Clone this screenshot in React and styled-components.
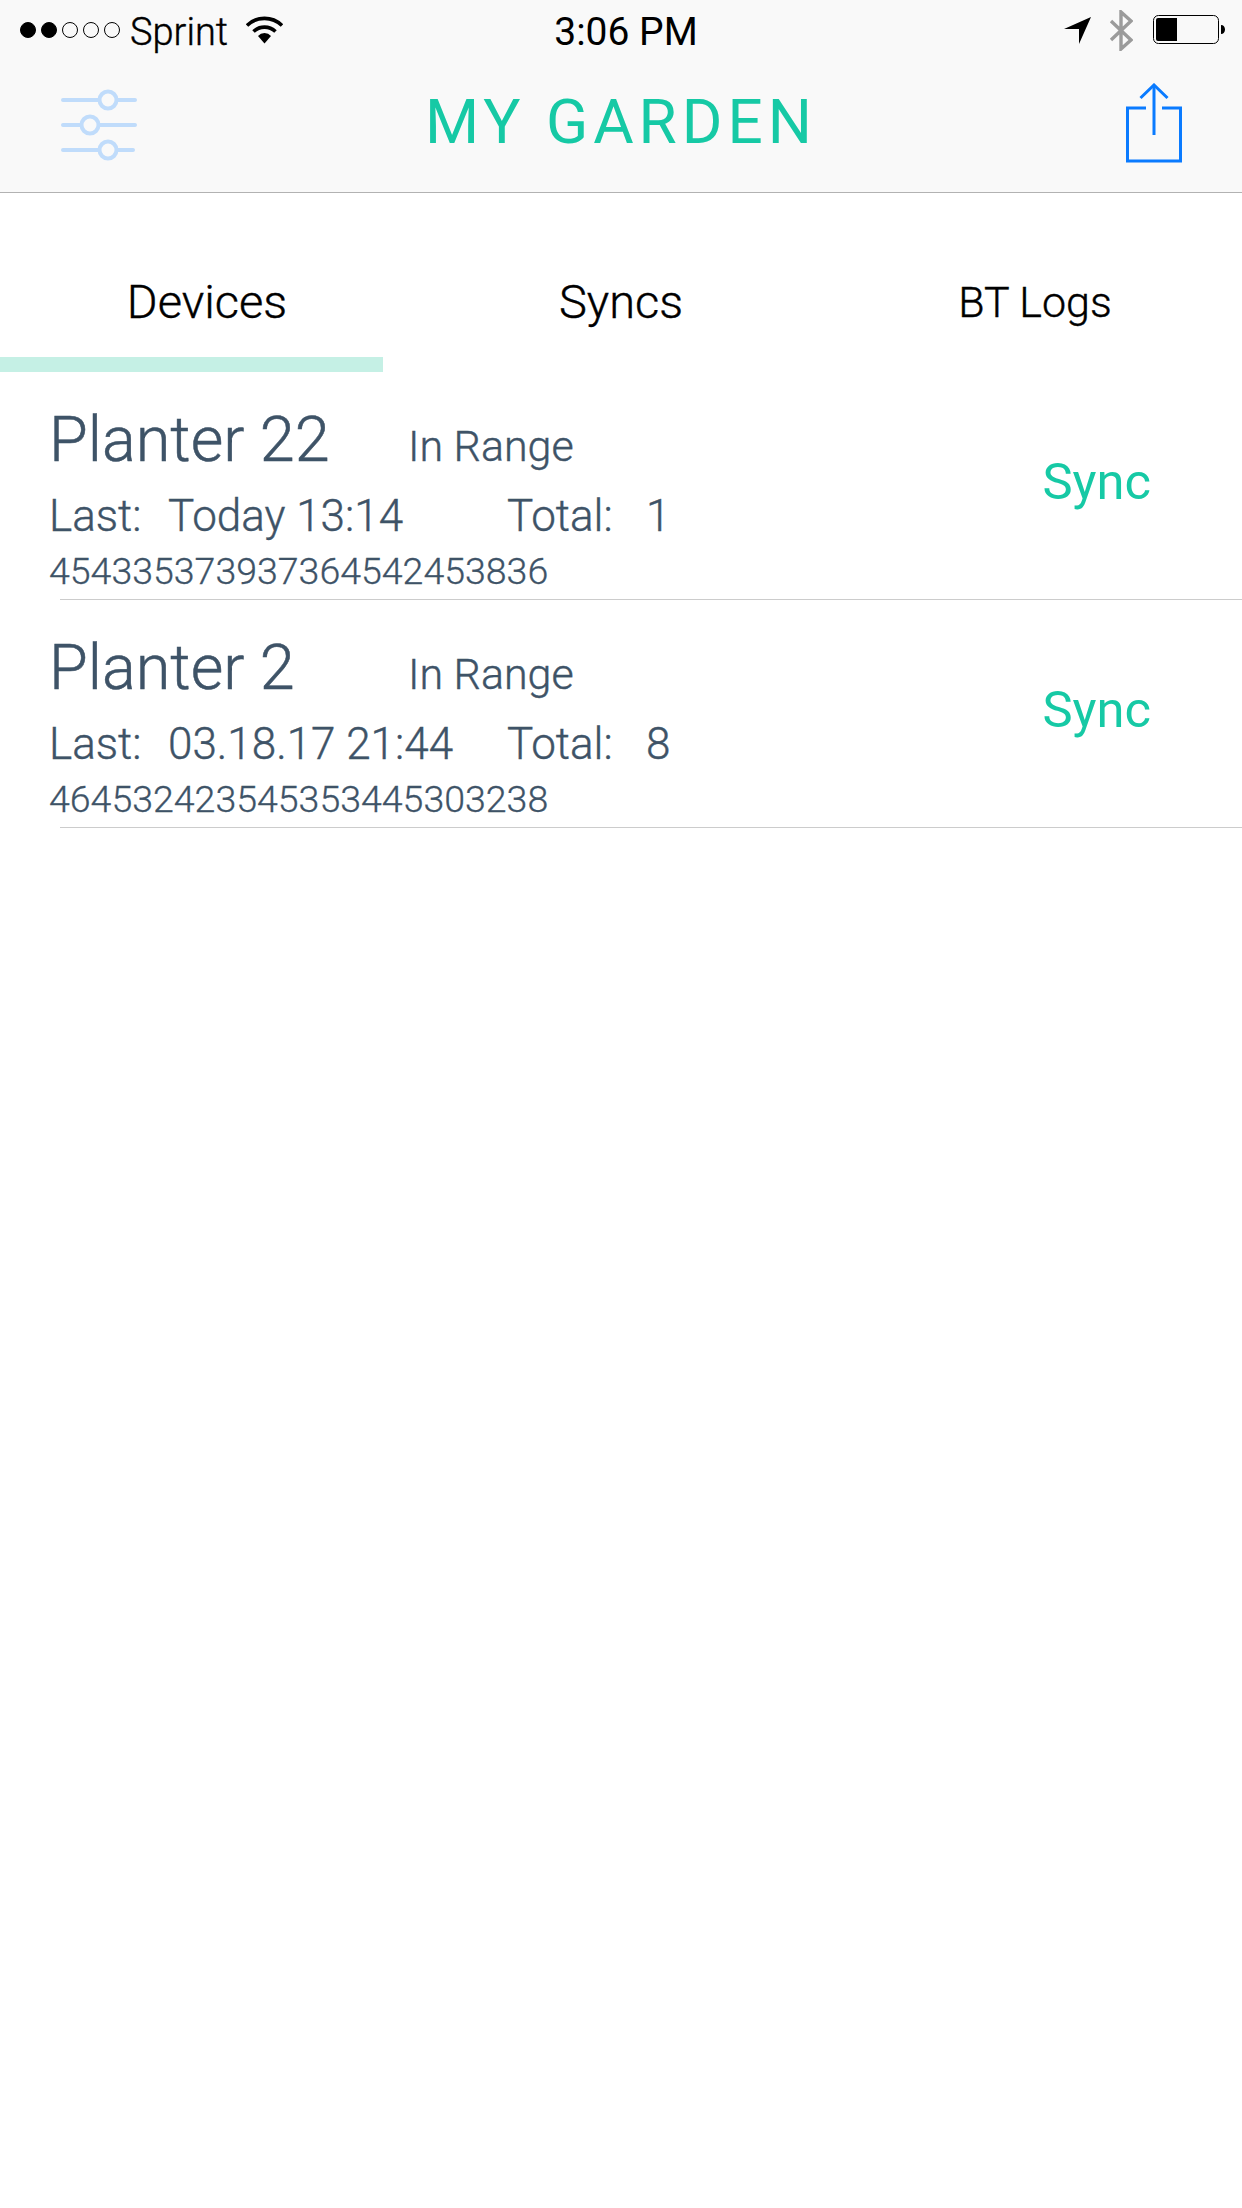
import React from "react";
import styled, { createGlobalStyle } from "styled-components";

const GlobalStyle = createGlobalStyle`
  html, body {
    margin: 0;
    padding: 0;
    background: #ffffff;
  }
  body {
    font-family: "Roboto", "Liberation Sans", sans-serif;
  }
`;

const Page = styled.div`
  width: 1242px;
  min-height: 2208px;
  background: #ffffff;
`;

const Header = styled.header`
  height: 192px;
  background: #f9f9f9;
  border-bottom: 1px solid #b2b2b2;
`;

const StatusBar = styled.div`
  height: 60px;
  display: grid;
  grid-template-columns: 1fr auto 1fr;
  align-items: center;
  color: #000;
`;

const StatusLeft = styled.div`
  display: flex;
  align-items: center;
  padding-left: 20px;
`;

const Dot = styled.span`
  width: 16px;
  height: 16px;
  box-sizing: border-box;
  border-radius: 50%;
  margin-right: 5px;
  border: 1px solid #000;
  background: ${(props) => (props.filled ? "#000" : "transparent")};
`;

const Carrier = styled.span`
  font-size: 38px;
  font-weight: 300;
  -webkit-text-stroke: 0.4px #000;
  margin: 3px 18px 0 5px;
`;

const Time = styled.div`
  font-size: 39px;
  font-weight: 400;
  padding: 3px 0 0 10px;
`;

const StatusRight = styled.div`
  display: flex;
  align-items: center;
  justify-content: flex-end;
  padding-right: 17px;
`;

const NavBar = styled.div`
  height: 132px;
  display: grid;
  grid-template-columns: 1fr auto 1fr;
  align-items: center;
`;

const SlidersButton = styled.button`
  display: block;
  border: 0;
  padding: 0 0 0 61px;
  background: none;
  justify-self: start;
`;

const ShareButton = styled.button`
  display: block;
  border: 0;
  padding: 0 60px 3px 0;
  background: none;
  justify-self: end;
`;

const Title = styled.h1`
  margin: 0 0 10px;
  font-size: 62px;
  font-weight: 400;
  letter-spacing: 5px;
  color: #16c9a5;
`;

const Tabs = styled.nav`
  display: grid;
  grid-template-columns: repeat(3, 414px);
  height: 179px;
`;

const Tab = styled.div`
  display: flex;
  flex-direction: column;
  align-items: ${(props) => (props.active ? "flex-start" : "center")};
  color: #000;
`;

const TabLabel = styled.div`
  height: 164px;
  font-size: ${(props) => props.size}px;
  font-weight: 300;
  -webkit-text-stroke: 0.4px #000;
  line-height: 218px;
  width: ${(props) => (props.active ? "414px" : "auto")};
  text-align: center;
`;

const TabMarker = styled.div`
  width: 383px;
  height: 15px;
  background: #c5f0e5;
`;

const DeviceRow = styled.div`
  height: 227px;
  box-sizing: border-box;
  padding: 0 91px 0 49px;
  display: flex;
  align-items: center;
  justify-content: space-between;
  color: #3e5367;
`;

const DeviceInfo = styled.div`
  display: flex;
  flex-direction: column;
  align-self: flex-start;
  padding-top: 31px;
`;

const NameLine = styled.div`
  display: grid;
  grid-template-columns: 359px auto;
  align-items: baseline;
  height: 87px;
`;

const Name = styled.div`
  font-size: 63px;
  font-weight: 300;
  -webkit-text-stroke: 0.5px #3e5367;
`;

const Range = styled.div`
  font-size: 43px;
  font-weight: 300;
  -webkit-text-stroke: 0.4px #3e5367;
`;

const MetaLine = styled.div`
  display: grid;
  grid-template-columns: 119px 339px 139px auto;
  font-size: 44px;
  font-weight: 300;
  -webkit-text-stroke: 0.4px #3e5367;
  height: 59px;
`;

const Serial = styled.div`
  font-size: 37.5px;
  font-weight: 300;
  -webkit-text-stroke: 0.3px #3e5367;
`;

const SyncLink = styled.div`
  font-size: 50.7px;
  font-weight: 400;
  margin-bottom: 8px;
  color: #16c9a5;
`;

const Divider = styled.div`
  height: 1px;
  margin-left: 60px;
  background: #cccccc;
`;

const SignalDots = () => (
  <>
    <Dot filled />
    <Dot filled />
    <Dot />
    <Dot />
    <Dot />
  </>
);

const WifiIcon = () => (
  <svg width="37" height="28" viewBox="0 0 37 28">
    <path d="M1 9.5a25 25 0 0 1 35 0" fill="none" stroke="#000" strokeWidth="3.6" />
    <path d="M7.5 15.5a16 16 0 0 1 22 0" fill="none" stroke="#000" strokeWidth="3.6" />
    <path d="M12 20a8.5 8.5 0 0 1 13 0l-6.5 7.5z" fill="#000" />
  </svg>
);

const LocationIcon = () => (
  <svg width="27" height="27" viewBox="0 0 27 27" style={{ marginRight: 18 }}>
    <path d="M27 0L15 27V12H0z" fill="#000" />
  </svg>
);

const BluetoothIcon = () => (
  <svg width="24" height="41" viewBox="0 0 24 41" style={{ marginRight: 20 }}>
    <path
      d="M2 11l20 19-10 9V2l10 9L2 30"
      fill="none"
      stroke="#9b9b9b"
      strokeWidth="3.4"
    />
  </svg>
);

const BatteryIcon = () => (
  <svg width="72" height="30" viewBox="0 0 72 30">
    <rect x="0.5" y="0.5" width="65" height="28" rx="5" fill="none" stroke="#000" strokeWidth="1" />
    <path d="M3 5a2 2 0 0 1 2-2h19v23H5a2 2 0 0 1-2-2z" fill="#000" />
    <path d="M68 10c2.500 0 4 2 4 4.500s-1.500 4.500-4 4.500z" fill="#000" />
  </svg>
);

const SlidersIcon = () => (
  <svg width="76" height="72" viewBox="0 0 76 72">
    <g fill="none" stroke="#c0dcfb" strokeWidth="4" strokeLinecap="round">
      <path d="M2 11h36M56 11h18" />
      <circle cx="47" cy="11" r="8.500" />
      <path d="M2 36h18M38 36h36" />
      <circle cx="29" cy="36" r="8.500" />
      <path d="M2 61h36M56 61h16" />
      <circle cx="47" cy="61" r="8.500" />
    </g>
  </svg>
);

const ShareIcon = () => (
  <svg width="56" height="80" viewBox="0 0 56 80">
    <g fill="none" stroke="#0a7bff" strokeWidth="3">
      <path d="M20 25H1.500v53h53V25H36" />
      <path d="M28 2v50" />
      <path d="M14.500 15L28 2l13.500 13" />
    </g>
  </svg>
);

const devices = [
  {
    name: "Planter 22",
    last: "Today 13:14",
    total: "1",
    serial: "454335373937364542453836",
  },
  {
    name: "Planter 2",
    last: "03.18.17 21:44",
    total: "8",
    serial: "464532423545353445303238",
  },
];

const App = () => (
  <Page>
    <GlobalStyle />
    <Header>
      <StatusBar>
        <StatusLeft>
          <SignalDots />
          <Carrier>Sprint</Carrier>
          <WifiIcon />
        </StatusLeft>
        <Time>3:06 PM</Time>
        <StatusRight>
          <LocationIcon />
          <BluetoothIcon />
          <BatteryIcon />
        </StatusRight>
      </StatusBar>
      <NavBar>
        <SlidersButton>
          <SlidersIcon />
        </SlidersButton>
        <Title>MY GARDEN</Title>
        <ShareButton>
          <ShareIcon />
        </ShareButton>
      </NavBar>
    </Header>
    <Tabs>
      <Tab active>
        <TabLabel active size={47}>Devices</TabLabel>
        <TabMarker />
      </Tab>
      <Tab>
        <TabLabel size={47}>Syncs</TabLabel>
      </Tab>
      <Tab>
        <TabLabel size={43}>BT Logs</TabLabel>
      </Tab>
    </Tabs>
    {devices.map((device) => (
      <React.Fragment key={device.serial}>
        <DeviceRow>
          <DeviceInfo>
            <NameLine>
              <Name>{device.name}</Name>
              <Range>In Range</Range>
            </NameLine>
            <MetaLine>
              <span>Last:</span>
              <span>{device.last}</span>
              <span>Total:</span>
              <span>{device.total}</span>
            </MetaLine>
            <Serial>{device.serial}</Serial>
          </DeviceInfo>
          <SyncLink>Sync</SyncLink>
        </DeviceRow>
        <Divider />
      </React.Fragment>
    ))}
  </Page>
);

export default App;
